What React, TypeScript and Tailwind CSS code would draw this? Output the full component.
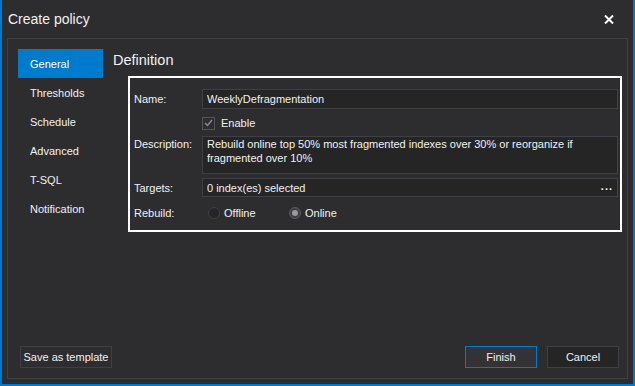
import { useState } from 'react';

const tabs = ['General', 'Thresholds', 'Schedule', 'Advanced', 'T-SQL', 'Notification'];

export default function App() {
  const [active, setActive] = useState('General');
  const [rebuild, setRebuild] = useState('Online');

  return (
    <div className="w-[635px] h-[386px] bg-[#2d2d30] border-x-2 border-b-2 border-[#007acc] flex flex-col text-[#f1f1f1] font-['Liberation_Sans',sans-serif] text-[11px] leading-[15px]">
      {/* Title bar */}
      <div className="h-[38px] shrink-0 flex items-center justify-between pl-[6px] pr-[19px]">
        <span className="text-[14px] leading-[20px]">Create policy</span>
        <svg width="10" height="9" viewBox="0 0 10 9" className="text-white">
          <path d="M1 0.5 L9 8.5 M9 0.5 L1 8.5" stroke="currentColor" strokeWidth="2" />
        </svg>
      </div>

      {/* Panel */}
      <div className="flex-1 mx-[5px] mb-[5px] border border-[#3f3f46] flex flex-col">
        <div className="flex pt-[10px]">
          {/* Sidebar */}
          <div className="ml-[10px] w-[85px] flex flex-col">
            {tabs.map((t) => (
              <button
                key={t}
                onClick={() => setActive(t)}
                className={`h-[29px] pl-[12px] pt-[1px] text-left ${active === t ? 'bg-[#007acc] text-white' : 'text-[#f1f1f1]'}`}
              >
                {t}
              </button>
            ))}
          </div>

          {/* Content */}
          <div className="ml-[10px] flex flex-col">
            <h2 className="text-[14.5px] leading-[22px] h-[22px]">Definition</h2>
            <div className="mt-[5px] ml-[15px] w-[494px] h-[156px] border-2 border-white pl-[4px] pr-[2px] pt-[11px]">
              <div className="grid grid-cols-[68px_1fr] items-start">
                <span className="h-[20px] flex items-center pt-[1px]">Name:</span>
                <div className="h-[20px] border border-[#3f3f46] bg-[#252526] flex items-center px-[4px] pt-[1px]">
                  WeeklyDefragmentation
                </div>

                <span />
                <label className="mt-[7px] h-[14px] flex items-center gap-[6px]">
                  <span className="w-[13px] h-[13px] border border-[#555558] bg-[#2d2d30] flex items-center justify-center">
                    <svg width="9" height="8" viewBox="0 0 9 8">
                      <path d="M1 4 L3.5 6.5 L8 1" stroke="#8a8a8e" strokeWidth="1.5" fill="none" />
                    </svg>
                  </span>
                  <span className="pt-[1px]">Enable</span>
                </label>

                <span className="mt-[6px] h-[16px] flex items-center">Description:</span>
                <div className="mt-[6px] h-[38px] border border-[#3f3f46] bg-[#252526] px-[4px] leading-[14px]">
                  Rebuild online top 50% most fragmented indexes over 30% or reorganize if fragmented over 10%
                </div>

                <span className="mt-[4px] h-[19px] flex items-center pt-[1px]">Targets:</span>
                <div className="mt-[4px] h-[19px] border border-[#3f3f46] bg-[#252526] flex items-center justify-between pl-[4px] pr-[4px] pt-[1px]">
                  <span>0 index(es) selected</span>
                  <span className="font-bold tracking-[1px] text-white leading-none pb-[4px]">...</span>
                </div>

                <span className="mt-[8px] h-[16px] flex items-center">Rebuild:</span>
                <div className="mt-[8px] h-[16px] flex items-center pl-[6px]">
                  {['Offline', 'Online'].map((r) => (
                    <button
                      key={r}
                      onClick={() => setRebuild(r)}
                      className="flex items-center gap-[4px] w-[81px]"
                    >
                      <span
                        className={`w-[12px] h-[12px] rounded-full border flex items-center justify-center ${
                          rebuild === r ? 'border-[#5a5a5e] bg-[#3f3f46]' : 'border-[#3f3f46] bg-[#252526]'
                        }`}
                      >
                        {rebuild === r && <span className="w-[6px] h-[6px] rounded-full bg-[#9a9a9e]" />}
                      </span>
                      {r}
                    </button>
                  ))}
                </div>
              </div>
            </div>
          </div>
        </div>

        {/* Footer */}
        <div className="mt-auto flex items-center pl-[12px] pr-[8px] pb-[10px]">
          <button className="h-[22px] w-[92px] whitespace-nowrap border border-[#3f3f46] bg-[#2d2d30]">Save as template</button>
          <div className="ml-auto flex gap-[10px]">
            <button className="h-[22px] w-[72px] border border-[#007acc] bg-[#333337]">Finish</button>
            <button className="h-[22px] w-[72px] border border-[#3f3f46] bg-[#252526]">Cancel</button>
          </div>
        </div>
      </div>
    </div>
  );
}
